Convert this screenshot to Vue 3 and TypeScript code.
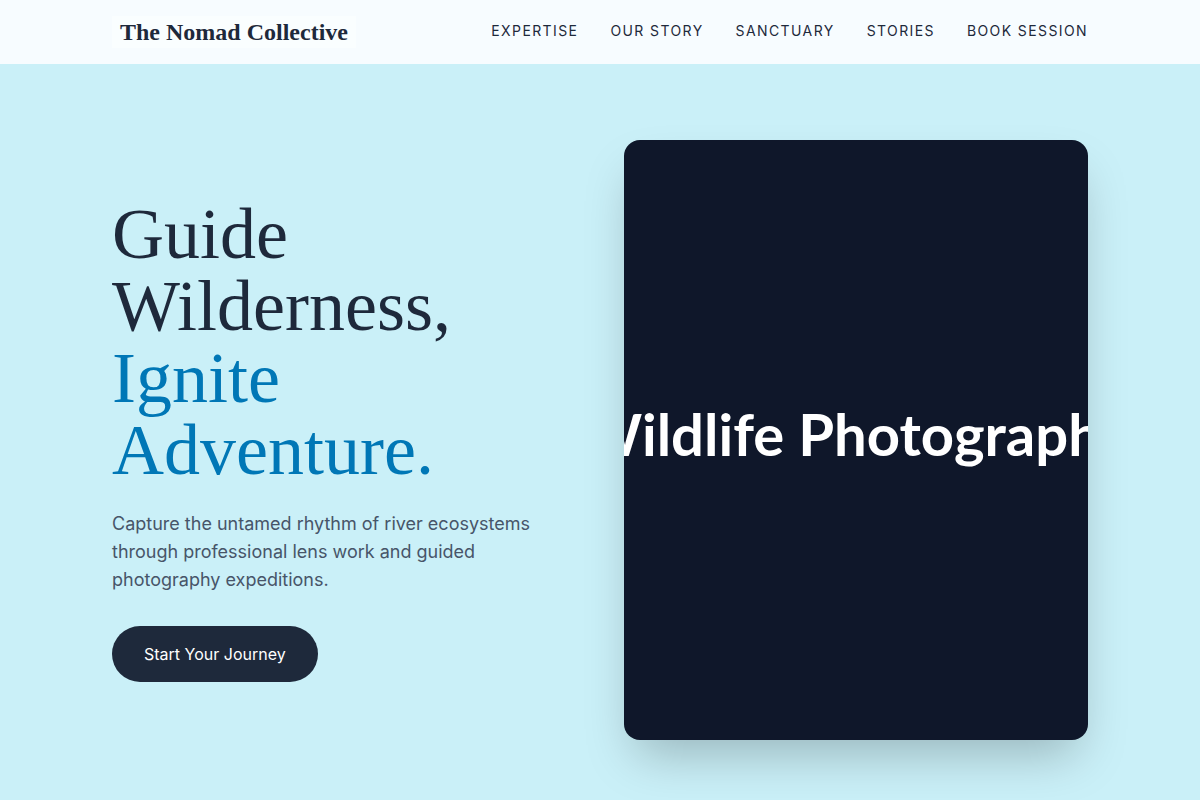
<script setup lang="ts">
interface NavLink {
  label: string
  href: string
}

const links: NavLink[] = [
  { label: 'Expertise', href: '#expertise' },
  { label: 'Our Story', href: '#story' },
  { label: 'Sanctuary', href: '#sanctuary' },
  { label: 'Stories', href: '#stories' },
  { label: 'Book Session', href: '#book' },
]
</script>

<template>
  <div class="page">
    <header class="header">
      <div class="bar">
        <a class="brand" href="#top">The Nomad Collective</a>
        <nav class="nav" aria-label="Main">
          <a v-for="link in links" :key="link.href" :href="link.href">{{ link.label }}</a>
        </nav>
      </div>
    </header>
    <main class="hero">
      <section class="copy">
        <h1>Guide Wilderness, <span class="accent">Ignite Adventure.</span></h1>
        <p>
          Capture the untamed rhythm of river ecosystems through professional lens work and guided
          photography expeditions.
        </p>
        <button class="cta" type="button">Start Your Journey</button>
      </section>
      <div class="photo"><span>Wildlife Photography</span></div>
    </main>
  </div>
</template>

<style>
body {
  margin: 0;
  background: #caf0f8;
}
</style>

<style scoped>
.page {
  min-height: 100vh;
  box-sizing: border-box;
  display: flex;
  flex-direction: column;
  background: #caf0f8;
  color: #1e293b;
  font-family: Inter, sans-serif;
}
.header {
  background: #f7fcff;
}
.bar {
  max-width: 976px;
  height: 64px;
  margin: 0 auto;
  padding: 0 32px;
  display: flex;
  align-items: center;
  justify-content: space-between;
}
.brand {
  padding: 0 8px;
  background: #fafeff;
  color: #1e293b;
  font: 700 24px/32px 'Liberation Serif', serif;
  text-decoration: none;
}
.nav {
  display: flex;
  gap: 32px;
  padding-bottom: 2px;
}
.nav a {
  color: #1e293b;
  font-size: 14px;
  line-height: 20px;
  letter-spacing: 0.1em;
  text-transform: uppercase;
  text-decoration: none;
  white-space: nowrap;
}
.hero {
  flex: 1;
  width: 100%;
  max-width: 1040px;
  box-sizing: border-box;
  margin: 0 auto;
  padding: 76px 32px 60px;
  display: grid;
  grid-template-columns: 1fr 1fr;
  gap: 48px;
  align-items: center;
}
h1 {
  margin: 0 0 24px;
  font: 400 72px/72px 'Liberation Serif', serif;
}
.accent {
  color: #0077b6;
}
p {
  max-width: 448px;
  margin: 0 0 32px;
  color: #475569;
  font-size: 18px;
  line-height: 28px;
}
.cta {
  padding: 16px 32px;
  border: 0;
  border-radius: 28px;
  background: #1e293b;
  color: #fff;
  font: 400 16px/24px Inter, sans-serif;
  cursor: pointer;
}
.photo {
  height: 600px;
  box-sizing: border-box;
  padding-bottom: 12px;
  display: flex;
  align-items: center;
  justify-content: center;
  overflow: hidden;
  border-radius: 16px;
  background: #0f172a;
  box-shadow: 0 25px 50px -12px rgba(0, 0, 0, 0.25);
  color: #fff;
  font: 700 58px/72px Lato, sans-serif;
  white-space: nowrap;
}
</style>
